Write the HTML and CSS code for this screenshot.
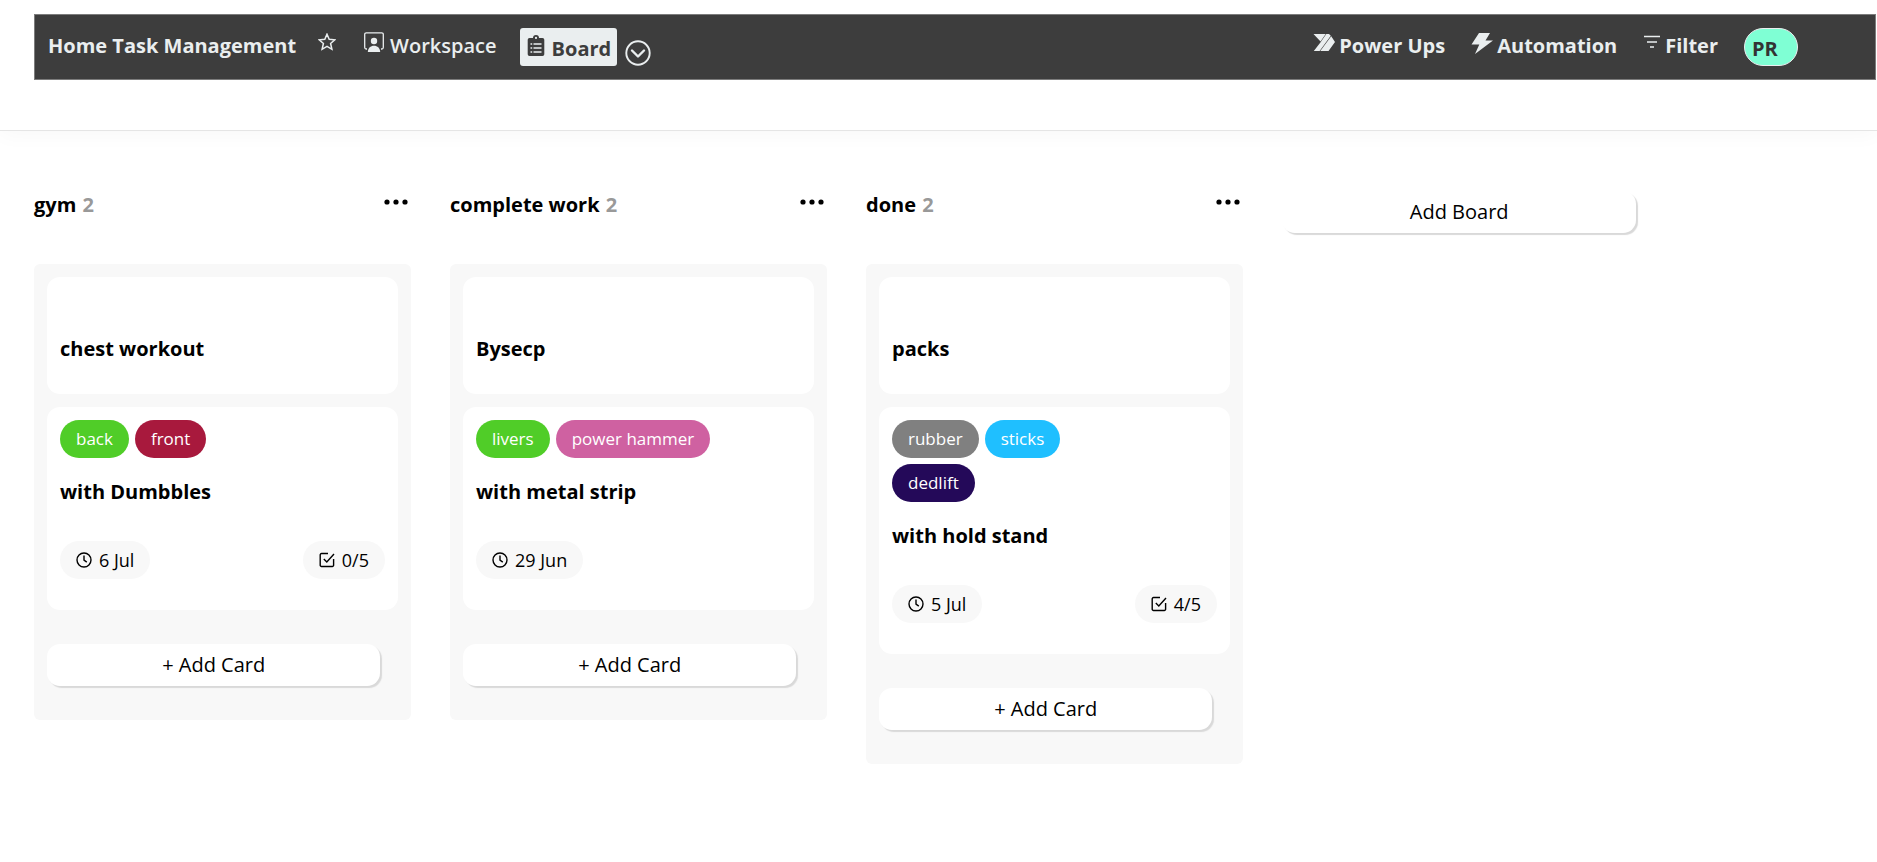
FILE: index.html
```html
<!DOCTYPE html>
<html lang="en">
<head>
<meta charset="utf-8">
<meta name="viewport" content="width=device-width, initial-scale=1">
<title>Home Task Management</title>
<link rel="stylesheet" href="styles.css">
</head>
<body>
<svg class="sprite" aria-hidden="true">
  <symbol id="clock" viewBox="0 0 16 16"><circle cx="8" cy="8" r="7" fill="none" stroke="currentColor" stroke-width="1.4"/><path d="M8 3.5V8.2l2.8 1.9" fill="none" stroke="currentColor" stroke-width="1.4"/></symbol>
  <symbol id="check" viewBox="0 0 16 16"><path d="M9 1.5H2.5a1.3 1.3 0 0 0-1.3 1.3v10.4a1.3 1.3 0 0 0 1.3 1.3h10.8a1.3 1.3 0 0 0 1.3-1.3V7" fill="none" stroke="currentColor" stroke-width="1.4"/><path d="M4.8 7l3 3 7.2-8" fill="none" stroke="currentColor" stroke-width="1.4"/></symbol>
  <symbol id="dots" viewBox="0 0 24 6"><circle cx="3" cy="3" r="2.6"/><circle cx="12" cy="3" r="2.6"/><circle cx="21" cy="3" r="2.6"/></symbol>
</svg>
<header class="topbar">
  <nav class="navbar">
    <div class="group">
      <h1 class="brand">Home Task Management</h1>
      <button class="icon-btn star" aria-label="Star board"><svg width="18" height="18" viewBox="0 0 18 18"><path d="M9 1.2l2.200 5.100 5.600.5-4.200 3.700 1.300 5.800L9 13.300l-4.900 3 1.300-5.800L1.200 6.800l5.600-.5z" fill="none" stroke="currentColor" stroke-width="1.500"/></svg></button>
      <a class="link workspace" href="#"><svg width="20" height="20" viewBox="0 0 20 20"><path d="M3 17H2.200A1.600 1.600 0 0 1 .7 15.500V2.500A1.600 1.600 0 0 1 2.300 .8h15.400a1.600 1.600 0 0 1 1.600 1.700v13a1.600 1.600 0 0 1-1.500 1.500H17" fill="none" stroke="currentColor" stroke-width="1.300"/><circle cx="10" cy="9" r="3.200" fill="currentColor"/><path d="M3.800 20c.3-4 2.700-6.200 6.200-6.200s5.900 2.200 6.200 6.200z" fill="currentColor"/></svg><span>Workspace</span></a>
      <div class="view">
        <a class="board-link" href="#"><svg width="18" height="22" viewBox="0 0 18 22"><path fill="currentColor" fill-rule="evenodd" d="M2.500 3H6a3 3 0 0 1 6 0h3.500A1.800 1.800 0 0 1 17.300 4.800v14.400a1.800 1.800 0 0 1-1.800 1.800h-13A1.800 1.800 0 0 1 .7 19.200V4.800A1.800 1.800 0 0 1 2.500 3zM9 1.800a1.100 1.100 0 1 0 0 2.200 1.100 1.100 0 0 0 0-2.200z"/><path d="M6.500 9h8M6.500 13h8M6.500 17h8M3.500 9h1.700M3.500 13h1.700M3.500 17h1.700" stroke="#eaeeef" stroke-width="1.500"/></svg><span>Board</span></a>
        <button class="icon-btn chevron" aria-label="More views"><svg width="26" height="26" viewBox="0 0 26 26"><circle cx="13" cy="13" r="11.700" fill="none" stroke="currentColor" stroke-width="1.900"/><path d="M7 10.500l6 6 6-6" fill="none" stroke="currentColor" stroke-width="2.400" stroke-linecap="round" stroke-linejoin="round"/></svg></button>
      </div>
    </div>
    <div class="group tools">
      <a class="link" href="#"><svg width="22" height="20" viewBox="0 0 22 20"><path fill="currentColor" d="M.5 2h12.200L7.500 9.500zM13.300 2h2.700l1.800 1.700L6.600 19H.8l6.600-8.500zM18.200 4.200L22 10l-6.500 9H7.300z"/></svg><span>Power Ups</span></a>
      <a class="link" href="#"><svg width="22" height="22" viewBox="0 0 22 22"><path fill="currentColor" d="M8 1h11l-4.500 7.500H22L4 22l4.300-9.500H.5z"/></svg><span>Automation</span></a>
      <a class="link" href="#"><svg width="18" height="20" viewBox="0 0 18 20"><path d="M1 4.500h16M4 10h10M7 15h4" stroke="currentColor" stroke-width="1.400"/></svg><span>Filter</span></a>
      <button class="avatar">PR</button>
    </div>
  </nav>
</header>
<main class="lists">
  <section class="list">
    <header class="list-head"><h2>gym <span>2</span></h2><button class="menu" aria-label="List menu"><svg width="24" height="6"><use href="#dots"/></svg></button></header>
    <div class="list-body">
      <article class="card"><div class="tags"></div><h3>chest workout</h3></article>
      <article class="card">
        <div class="tags"><span class="tag green">back</span><span class="tag crimson">front</span></div>
        <h3>with Dumbbles</h3>
        <div class="meta"><span class="pill"><svg width="16" height="16"><use href="#clock"/></svg>6 Jul</span><span class="pill"><svg width="16" height="16"><use href="#check"/></svg>0/5</span></div>
      </article>
      <button class="add add-card">+ Add Card</button>
    </div>
  </section>
  <section class="list">
    <header class="list-head"><h2>complete work <span>2</span></h2><button class="menu" aria-label="List menu"><svg width="24" height="6"><use href="#dots"/></svg></button></header>
    <div class="list-body">
      <article class="card"><div class="tags"></div><h3>Bysecp</h3></article>
      <article class="card">
        <div class="tags"><span class="tag green">livers</span><span class="tag pink">power hammer</span></div>
        <h3>with metal strip</h3>
        <div class="meta"><span class="pill"><svg width="16" height="16"><use href="#clock"/></svg>29 Jun</span></div>
      </article>
      <button class="add add-card">+ Add Card</button>
    </div>
  </section>
  <section class="list">
    <header class="list-head"><h2>done <span>2</span></h2><button class="menu" aria-label="List menu"><svg width="24" height="6"><use href="#dots"/></svg></button></header>
    <div class="list-body">
      <article class="card"><div class="tags"></div><h3>packs</h3></article>
      <article class="card">
        <div class="tags"><span class="tag gray">rubber</span><span class="tag sky">sticks</span><span class="tag indigo">dedlift</span></div>
        <h3>with hold stand</h3>
        <div class="meta"><span class="pill"><svg width="16" height="16"><use href="#clock"/></svg>5 Jul</span><span class="pill"><svg width="16" height="16"><use href="#check"/></svg>4/5</span></div>
      </article>
      <button class="add add-card">+ Add Card</button>
    </div>
  </section>
  <button class="add add-board">Add Board</button>
</main>
</body>
</html>
```
FILE: styles.css
```css
* { box-sizing: border-box; }
body { margin: 0; background: #fff; color: #000; font-family: "Open Sans", "Noto Sans", sans-serif; font-size: 20px; line-height: 28px; }
button { margin: 0; padding: 0; border: 0; background: none; color: inherit; font: inherit; cursor: pointer; }
a { color: inherit; text-decoration: none; }
h1, h2, h3 { margin: 0; font-size: 20px; font-weight: 700; white-space: nowrap; }
svg { display: block; flex: none; }
.sprite { position: absolute; width: 0; height: 0; }

.topbar { padding: 14px 1px 50px 34px; border-bottom: 1px solid #e5e5e5; box-shadow: 0 4px 20px rgba(0, 0, 0, 0.03); background: #fff; }
.navbar { display: flex; justify-content: space-between; align-items: flex-start; height: 66px; padding: 13px 77px 0 13px; border: 1px solid #7c7c7c; background: #3d3d3d; color: #eaeeef; }
.group { display: flex; align-items: flex-start; }
.brand { margin-top: 4px; }
.star { margin: 5px 0 0 22px; }
.link { display: flex; gap: 6px; margin-top: 4px; font-weight: 700; }
.workspace { margin-left: 28px; font-weight: 600; }
.view { display: flex; margin-left: 23px; }
.board-link { display: flex; gap: 7px; height: 38px; padding: 7px 6px 7px 7px; border-radius: 3px; background: #eaeeef; color: #3d3d3d; font-weight: 700; }
.chevron { margin: 12px 0 0 8px; }
.tools { gap: 26px; }
.tools .link { gap: 4px; }
.avatar { width: 54px; height: 38px; padding: 4px 0 0 7px; border: 1px solid #eaeeef; border-radius: 19px; background: #7fffd4; color: #333; font-weight: 700; text-align: left; }

.lists { display: grid; grid-template-columns: repeat(4, minmax(300px, 1fr)); gap: 39px; align-items: start; padding: 58px 218px 24px 34px; }
.list-head { display: flex; justify-content: space-between; padding: 2px 3px 0 0; height: 75px; }
.list-head h2 span { margin-left: 1px; color: #999; }
.menu { height: 22px; }
.list-body { padding: 13px 13px 34px; border-radius: 6px; background: #f8f8f8; }
.card { min-height: 117px; margin-bottom: 13px; padding: 13px 13px 31px; border-radius: 13px; background: #fff; }
.tags { display: flex; flex-wrap: wrap; gap: 6px; max-width: 245px; min-height: 25px; }
.tag, .pill { display: flex; align-items: center; height: 38px; padding: 0 16px; border-radius: 19px; font-size: 17px; white-space: nowrap; }
.tag { color: #fff; }
.green { background: #50cd28; }
.crimson { background: #a8193d; }
.pink { background: #cf61a1; }
.gray { background: #808080; }
.sky { background: #1fbfff; }
.indigo { background: #240959; }
.card h3 { margin-top: 20px; }
.meta { display: flex; justify-content: space-between; margin-top: 35px; }
.pill { gap: 7px; background: #f8f8f8; font-size: 18px; }
.add { display: block; height: 42px; border-radius: 13px; background: #fff; text-align: center; box-shadow: 2px 2px 1px #d9d9d9; }
.add-card { width: 95%; margin-top: 34px; }
.add-board { width: 94%; margin-top: 2px; }
```
